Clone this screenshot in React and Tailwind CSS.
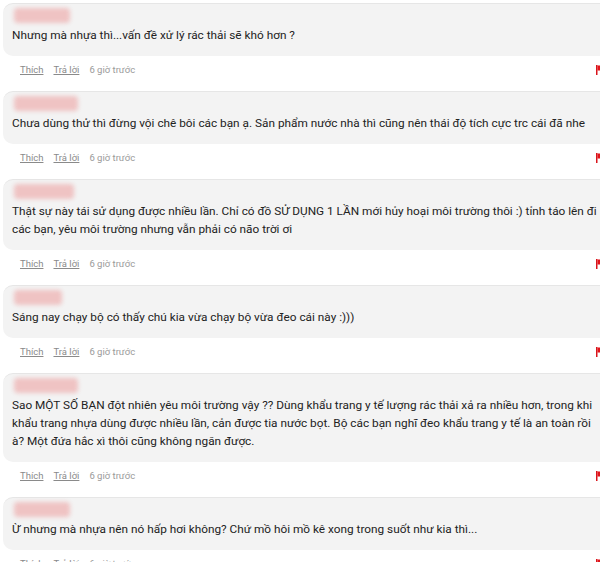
import React from 'react';

const comments = [
  { name: 'w-[56px]', text: 'Nhưng mà nhựa thì...vấn đề xử lý rác thải sẽ khó hơn ?' },
  { name: 'w-[64px]', text: 'Chưa dùng thử thì đừng vội chê bôi các bạn ạ. Sản phẩm nước nhà thì cũng nên thái độ tích cực trc cái đã nhe' },
  { name: 'w-[60px]', text: 'Thật sự này tái sử dụng được nhiều lần. Chỉ có đồ SỬ DỤNG 1 LẦN mới hủy hoại môi trường thôi :) tỉnh táo lên đi các bạn, yêu môi trường nhưng vẫn phải có não trời ơi' },
  { name: 'w-[48px]', text: 'Sáng nay chạy bộ có thấy chú kia vừa chạy bộ vừa đeo cái này :)))' },
  { name: 'w-[64px]', text: 'Sao MỘT SỐ BẠN đột nhiên yêu môi trường vậy ?? Dùng khẩu trang y tế lượng rác thải xả ra nhiều hơn, trong khi khẩu trang nhựa dùng được nhiều lần, cản được tia nước bọt. Bộ các bạn nghĩ đeo khẩu trang y tế là an toàn rồi à? Một đứa hắc xì thôi cũng không ngăn được.' },
  { name: 'w-[56px]', text: 'Ừ nhưng mà nhựa nên nó hấp hơi không? Chứ mồ hôi mồ kê xong trong suốt như kia thì...' },
];

function Flag() {
  return (
    <svg width="8" height="10" viewBox="0 0 8 10" className="absolute right-[-4px] top-[3px]">
      <rect x="0" y="0" width="1.5" height="10" fill="#d9141b" />
      <path d="M1.5 0.5 H7 L5.5 3 L7 5.5 H1.5 Z" fill="#e0141b" />
    </svg>
  );
}

function Comment({ c }) {
  return (
    <div>
      <div className="rounded-[10px] bg-[#f3f3f3] border-t border-[#e6e6e6] pt-[4px] pb-[12px] pl-[9px] pr-[14px]">
        <div className={`h-[15px] ${c.name} mb-[3px] ml-[2px] rounded-[4px] bg-[#efc3c3] blur-[2px]`} />
        <p className="text-[11.8px] leading-[18px] text-[#222]">{c.text}</p>
      </div>
      <div className="relative h-[16px] mt-[6px] mb-[13px] pl-[17px] flex items-center gap-[10px] text-[9.5px] text-[#8a8a8a]">
        <span className="underline">Thích</span>
        <span className="underline">Trả lời</span>
        <span className="text-[#9a9a9a]">6 giờ trước</span>
        <div className="absolute left-[597px] top-0">
          <Flag />
        </div>
      </div>
    </div>
  );
}

export default function App() {
  return (
    <div className="w-[600px] h-[562px] overflow-hidden bg-white" style={{ fontFamily: 'Roboto, "Liberation Sans", sans-serif' }}>
      <div className="w-[612px] pl-[3px] pt-[3px] flex flex-col">
        {comments.map((c, i) => (
          <Comment key={i} c={c} />
        ))}
      </div>
    </div>
  );
}
